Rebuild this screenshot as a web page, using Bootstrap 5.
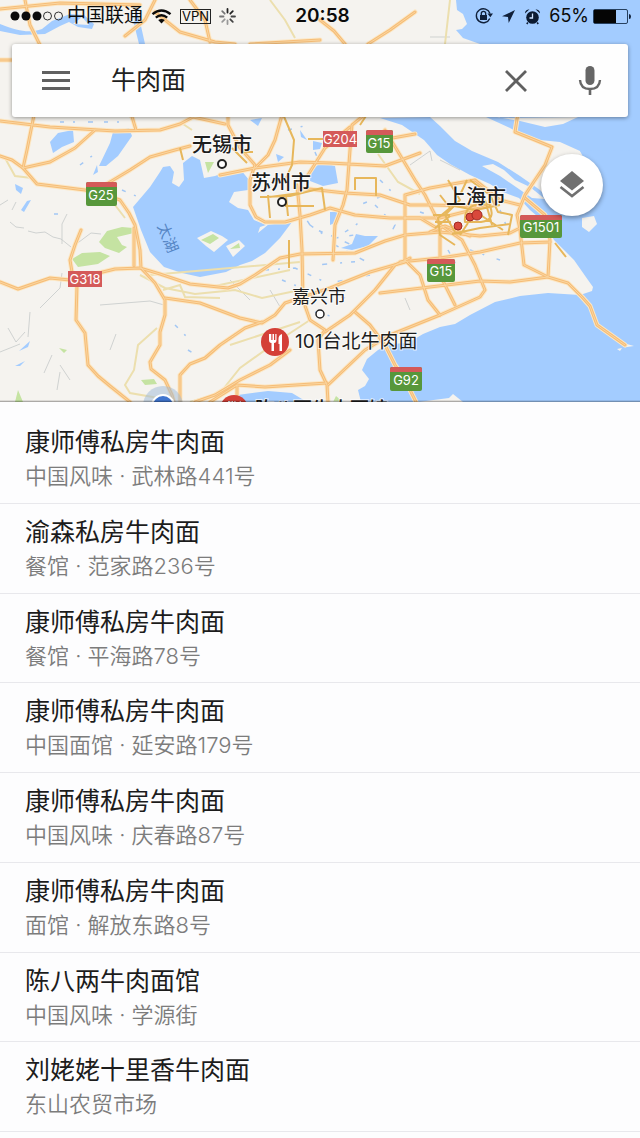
<!DOCTYPE html>
<html lang="zh-CN">
<head>
<meta charset="utf-8">
<meta name="viewport" content="width=device-width, initial-scale=1">
<title>牛肉面</title>
<link href="https://cdn.jsdelivr.net/npm/bootstrap@5.3.0/dist/css/bootstrap.min.css" rel="stylesheet">
<style>
body { font-family: Inter, "Noto Sans CJK SC", sans-serif; background: #fdfdfe; color: #212121; }
.map-pane { height: 402px; background: #f5f3ef; }
.map-canvas { position: absolute; inset: 0; width: 100%; height: 100%; }
.map-pane::after { content: ""; position: absolute; inset: auto 0 0 0; height: 2px; background: linear-gradient(transparent, rgba(0,0,0,.4)); }
.status { height: 32px; padding: 0 9px 0 10px; color: #0b0b0b; font-size: 19px; line-height: 32px; }
.status > div { flex: 1 1 0; }
.status .clock { flex: 0 0 auto; margin-left: 4px; font-weight: 600; }
.status-text { font-size: 18px; }
.carrier { margin-left: 3px; }
.vpn { font-size: 13px; line-height: 13px; border: 1px solid #222; padding: 0 1px; }
.search { height: 73px; margin: 12px 12px 0; border-radius: 3px; background: #fefefe; box-shadow: 0 1px 4px rgba(0,0,0,.4); padding: 0 18px 0 24px; }
.search input { font-size: 25px; color: #212121; padding: 0; margin-left: 35px; min-width: 0; }
.search input:focus { box-shadow: none; background: transparent; }
.icon-btn { width: 40px; height: 40px; padding: 0; border: 0; display: flex; align-items: center; justify-content: center; }
.voice { margin-left: 34px; }
.layers { position: absolute; right: 37px; top: 154px; width: 62px; height: 62px; border-radius: 50%; background: #fff; box-shadow: 0 2px 5px rgba(0,0,0,.4); }
.results { padding: 12px 0 6px; }
.results .result.list-group-item { border-width: 0 0 1px; border-color: #e8e8ec; background: transparent; padding: 10px 25px 8px; border-radius: 0; }
.results .result.list-group-item:last-child { border-bottom-width: 1px; }
.result h2 { font-size: 25px; line-height: 36px; font-weight: 400; color: #1c1c1c; margin: 0; }
.result p { font-size: 22px; line-height: 32px; font-weight: 350; color: #7c7c7c; margin: 0; }
.city { font-size: 20px; fill: #1d1d1d; stroke: #fff; stroke-opacity: .7; stroke-width: 2; paint-order: stroke; font-weight: 500; }
.place { font-weight: 400; font-size: 19px; }
.shield { font-size: 13px; fill: #fff; font-weight: 400; text-anchor: middle; }
</style>
</head>
<body class="min-vh-100 d-flex flex-column">
<header class="map-pane position-relative overflow-hidden flex-shrink-0">
<svg class="map-canvas" viewBox="0 0 640 402" preserveAspectRatio="xMidYMid slice" role="img" aria-label="地图">
  <defs>
    <g id="roads" fill="none" stroke-linejoin="round" stroke-linecap="round">
      <path d="M0 121L50 127 115 131 160 130 180 124 193 117M35 110L27 150 23 168M95 130L75 148 50 162 23 168M130 110L136 130"/>
      <path d="M0 156L12 160 23 168 37 184 85 190 105 195 120 200 129 213 135 225 140 250 141 268 155 283 165 300 165 315 160 332 160 345 150 362 151 369 165 380 172 395 174 402"/>
      <path d="M105 185L130 170 150 157 175 150 190 146M193 117L225 124"/>
      <path d="M0 282L18 289 50 278 70 280 115 269 140 268 160 274 190 284 228 288 240 284 255 275 280 258 300 254 355 253 385 241 405 235 440 232 480 236 510 233 520 228"/>
      <path d="M77 285L76 320 85 333 88 365 98 376 110 386 130 402M72 272L70 260 75 245 81 230"/>
      <path d="M165 298L200 303 240 318 262 323 275 315 285 303 330 288 370 272 405 262M134 228L134 266"/>
      <path d="M180 402L180 375 190 364 205 358 220 345 245 328 262 322M195 402L215 395 240 380 270 365 290 350M210 402L237 385 265 387 327 383M237 385V395"/>
      <path d="M297 185L300 215 302 250 303 300 310 320 325 330 318 340 320 370 327 385 328 402M325 332L350 315 375 290 395 265 410 258"/>
      <path d="M228 100L228 125 240 148 255 165 250 180 250 205 256 217 265 222 285 222 310 215 330 208 355 215 390 218 420 218 440 230M282 115L275 140 268 155 255 168 220 175"/>
      <path d="M255 168L300 162 330 163 385 166 420 153M368 112L352 125 350 150 347 190 343 205 335 225 333 260M350 127L325 148 308 175"/>
      <path d="M385 130L403 160 415 180 425 195 440 225 462 240 475 265 485 290 480 297 440 315 390 335 365 350 328 385"/>
      <path d="M300 188L345 193 380 195 410 205 430 205 475 206M405 195L430 188 475 180 500 200 520 205M405 195L405 260 420 275 428 300 440 315"/>
      <path d="M520 100L515 132 530 138 552 147 545 165 535 180 525 195 517 215 520 230 524 265 548 277 568 283 582 297 590 306 597 325 625 345M525 198L545 215 550 240 548 277M387 139L415 134"/>
      <path d="M548 277L510 282 480 281 430 287 380 293M440 228L440 275 455 305M400 262L440 258 480 252 520 243 550 242M355 312L370 325 385 345 395 365 405 380 416 402"/>
      <path d="M25 0L30 25 40 45M0 9L60 3 140 5M155 0L145 20 125 36M155 12L180 32 215 42 235 44M190 0L205 20 210 42M320 20L334 31 345 44M368 44L390 30 415 12M0 60H12M430 232L445 226 470 236M405 218L440 218 480 208 490 205M250 44L320 40"/>
    </g>
  </defs>
  <rect width="640" height="402" fill="#f5f3ef"/>
  <g fill="#a3ccff">
    <path d="M456 0L457 10 463 14 467 24 462 29 456 30 463 38 480 44 500 118 578 117 563 124 545 127 520 121 497 117 486 117 510 128 530 139 560 142 580 151 598 168 640 160V0Z"/>
    <path d="M380 118L402 125 424 140 437 155 450 164 470 175 490 184 503 192 519 198 530 210 544 222 554 240 574 260 588 280 593 287 592 291 580 295 548 293 520 296 495 302 470 315 455 324 440 327 423 334 408 343 390 344 378 350 367 359 362 370 369 379 365 386 358 390 361 402H640V150L580 151 598 185 560 210 540 190 520 176 498 162 472 151 455 141 440 126 430 117Z"/>
    <path d="M133 207L150 187 160 172 163 167 170 166 174 172 172 183 179 187 184 180 183 163 192 156 200 160 204 178 215 176 228 171 241 170 249 180 248 190 234 192 229 202 238 208 248 210 254 220 266 225 292 222 280 238 265 253 252 261 240 265 226 272 200 277 182 273 164 267 150 252 141 230Z"/>
    <path d="M50 142L58 133 73 130 74 142 62 147 53 153ZM113 132L129 128 132 136 118 156 106 166 99 166 110 143ZM311 170L322 162 335 166 338 183 323 186 310 181ZM341 248L352 244 356 234 365 236 378 236 368 246 352 250ZM330 212H338L337 222 330 225ZM15 184L23 188 21 194 16 190ZM31 200L24 212 21 210 27 201ZM230 396L268 391 292 393 307 402H234ZM300 130L307 140 301 137ZM313 141L322 143 320 149 313 150ZM97 165L93 175 98 172ZM276 154L284 157 278 162ZM250 120L262 118 258 126ZM19 351L30 341 28 347ZM15 366L25 361 20 366Z"/>
    <path d="M0 24C20 32 30 33 42 29L52 21 70 14 84 15 94 24 92 29 78 27 69 22 60 26 45 34 20 35 0 31ZM136 8L141 26 145 44H139L134 24Z"/>
  </g>
  <g fill="#f5f3ef">
    <path d="M482 166L493 164 504 170 515 180 530 187 545 199 532 198 516 187 500 176ZM582 218L594 216 597 224 589 232 582 227ZM197 238L211 231 222 236 228 240 214 252 206 246ZM226 246L239 240 245 246 233 257ZM260 227L269 224 258 233ZM418 402L449 398 453 394 463 402ZM73 24L82 17 89 25ZM623 343L634 346 627 347ZM617 349L622 348 620 351Z"/>
  </g>
  <g fill="#c5e3a2">
    <path d="M99 242L107 231 122 227 133 228 134 233 117 237 122 245 127 247 119 253 105 248ZM72 259L82 253 100 252 110 256 98 264 78 267ZM201 240L213 234 219 238 210 244ZM141 380L154 379 157 384 145 385ZM59 348L67 350 64 353ZM15 402L18 390 23 402ZM205 162L214 162 208 173ZM230 249L239 243 240 248ZM336 396L343 402H333Z"/>
  </g>
  <g fill="none" stroke="#c5c9c9" stroke-width="1" opacity=".8">
    <path d="M0 205l8-5m8 2l-4 8m-2 12l6 5 8 1m4 3l8 2 9-1 8 5 8 2 10 8m4-2l16-12 10 1M67 214l-5 10 0 20M30 312l-2 25M8 328l8 14 9-10M40 308l20-20 2-15M52 355l-8 18M60 372l-3 18M70 380l-10-15M410 165l20-14 2 10M405 298l5 12M100 305l50-4 14 4M0 352l20-8M440 160l20 10M230 280l20 20M270 290l12 20M110 350l6-16M430 37h20"/>
  </g>
  <g fill="none" stroke="#8dbcf5" stroke-width="1.5" stroke-dasharray="4 9 2 13 5 11" opacity=".8">
    <path d="M60 122h60M80 165l16-12M122 190l14 6M286 205l14 5 12 18 20 8 22 10M310 225l20 14 30-5M335 245l30 16-50 4M265 270l30-2 30 14M282 280l25 10-20 14M375 205l20 20-10 20M420 212l30 10M470 250l30 10M380 180l12 12-30 12M345 232l18-12M175 325l12 12M188 350l10 6M54 214h6M288 130l24-6M315 152l5 12M500 210l8 20M448 250l12 22M370 275l-40 8M345 298l-22-6M315 312l30 8"/>
  </g>
  <g fill="none" stroke="#ecdfae" stroke-width="2">
    <path d="M5 158L15 176 32 178M140 275L165 288 195 294 235 290 262 298 300 290M163 290L180 285 185 297 220 298M157 328L138 345 134 370 125 385 130 393 170 400M190 402L220 393 240 368 275 343 310 320M150 275L300 262M270 0L285 20 295 38M115 205L125 218M180 122l12 8M445 44L450 0M128 112l5 10M230 345L300 322M378 154l20 28 22 12M215 286L290 270"/>
  </g>
  <use href="#roads" stroke="#fce8c6" stroke-width="5"/>
  <use href="#roads" stroke="#f6bd78" stroke-width="3"/>
  <use href="#roads" stroke="#fad6a0" stroke-width="1"/>
  <g fill="none" stroke="#e7b75b" stroke-width="2" stroke-linejoin="round">
    <path d="M282 112L294 140 292 165 286 178M232 148L247 163M180 148L183 160M355 190V178H376V196M260 197L290 196 322 188 325 210M268 195L270 218M286 196L288 216M285 206H314M270 197l30-4M308 139h22M289 240v28M370 110l-10 15M253 152h-10"/>
    <path d="M440 195L450 208 438 218 440 235 455 245M448 180L460 200 445 215 455 232M433 215H450M435 222h16M470 180L490 195 498 212 512 215 508 235M485 200L492 225M450 205L475 210 500 205M452 234L480 228 510 224M467 180L460 195M435 228L450 216M555 243L566 257M465 222q-2-20 24-18 8 16-8 18zM473 210l30 20M460 235l8-12"/>
  </g>
  <g fill="#d9483b" stroke="#9f2921" stroke-width="1"><circle cx="458" cy="226" r="4"/><circle cx="470" cy="217" r="4"/><circle cx="477" cy="215" r="5"/></g>
  <g fill="#fff" stroke="#222" stroke-width="2"><circle cx="222" cy="164" r="4"/><circle cx="282" cy="202" r="4"/><circle cx="320" cy="314" r="4" stroke-width="1.5"/></g>
  <circle cx="163" cy="406" r="20" fill="#9db9d8" opacity=".5"/><circle cx="163" cy="406" r="11" fill="#3f75cf" stroke="#fff" stroke-width="2"/>
  <text transform="translate(160 238) rotate(68)" font-size="15" fill="#5585c4" y="-2" x="-12">太湖</text>
  <g class="city"><text x="192" y="152">无锡市</text><text x="251" y="190">苏州市</text><text x="446" y="204">上海市</text></g>
  <g class="city place"><text x="292" y="303" font-size="18">嘉兴市</text><text x="295" y="348">101台北牛肉面</text><text x="255" y="416" font-weight="500">陈八两牛肉面馆</text></g>
  <g id="pin"><circle cx="275" cy="342" r="14" fill="#d43f37"/><path d="M269 334v6q0 3 2.500 3v8h2.500v-8q2.500 0 2.500-3v-6h-1.200v6h-1.300v-6h-1.500v6h-1.200v-6zM282 351h-2.500v-7h-1v-5q0-4 3.500-5z" fill="#fff"/></g>
  <use href="#pin" x="-41" y="67"/>
  <g>
    <g fill="#57973b"><rect x="86" y="182" width="31" height="24" rx="2"/><rect x="366" y="130" width="27" height="23" rx="2"/><rect x="520" y="215" width="42" height="23" rx="2"/><rect x="427" y="259" width="28" height="23" rx="2"/><rect x="390" y="367" width="32" height="24" rx="2"/></g>
    <g fill="#d45a59"><path d="M86 187v-3q0-2 2-2h27q2 0 2 2v3zM366 135v-3q0-2 2-2h23q2 0 2 2v3zM520 220v-3q0-2 2-2h38q2 0 2 2v3zM427 264v-3q0-2 2-2h24q2 0 2 2v3zM390 372v-3q0-2 2-2h28q2 0 2 2v3z"/><rect x="323" y="131" width="34" height="16"/><rect x="68" y="271" width="34" height="16"/></g>
  </g>
  <g class="shield"><text x="101" y="200">G25</text><text x="379" y="148">G15</text><text x="541" y="232">G1501</text><text x="441" y="276">G15</text><text x="406" y="385">G92</text><text x="340" y="144">G204</text><text x="85" y="284">G318</text></g>
</svg>

<div class="status position-relative d-flex align-items-center">
  <div class="d-flex align-items-center">
    <svg width="54" height="12" viewBox="0 0 54 12" aria-label="信号"><g fill="#0b0b0b"><circle cx="5" cy="6" r="4.500"/><circle cx="16" cy="6" r="4.500"/><circle cx="27" cy="6" r="4.500"/></g><g fill="none" stroke="#333"><circle cx="37.500" cy="6" r="4"/><circle cx="48.500" cy="6" r="4"/></g></svg>
    <span class="carrier text-nowrap">中国联通</span>
    <svg class="ms-2 flex-shrink-0" width="21" height="15" viewBox="0 0 21 15" fill="none" stroke="#0b0b0b" stroke-width="2.400"><path d="M1.500 5.200q9-7.500 18 0M4.800 8.600q5.700-4.500 11.400 0"/><path d="M10.500 14.500l-3.300-3.400q3.300-2.400 6.600 0z" fill="#0b0b0b" stroke="none"/></svg>
    <span class="vpn ms-2">VPN</span>
    <svg class="ms-2 flex-shrink-0" width="17" height="17" viewBox="-8.500 -8.500 17 17" stroke-width="1.800" stroke-linecap="round"><path d="M0-4V-7.500M2.800-2.800L5.300-5.300" stroke="#222"/><path d="M4 0H7.500M2.800 2.800L5.300 5.300" stroke="#444"/><path d="M0 4V7.500M-2.800 2.800L-5.300 5.300" stroke="#999"/><path d="M-4 0H-7.500M-2.800-2.800L-5.300-5.300" stroke="#777"/></svg>
  </div>
  <div class="clock">20:58</div>
  <div class="d-flex align-items-center justify-content-end">
    <svg width="18" height="18" viewBox="0 0 18 18"><path d="M14.800 11.500a7 7 0 1 1 .2-5" fill="none" stroke="#10203a" stroke-width="1.400"/><path d="M12.500 6.500h5.500l-2.700 3.800z" fill="#10203a"/><rect x="5" y="8" width="7" height="5" fill="#10203a"/><path d="M6.300 8V6.500a2.200 2.200 0 0 1 4.400 0V8" fill="none" stroke="#10203a" stroke-width="1.300"/></svg>
    <svg class="ms-2" width="15" height="15" viewBox="0 0 15 15"><path d="M14 1L1 7.300l6 .7.700 6z" fill="#10203a"/></svg>
    <svg class="ms-2" width="17" height="17" viewBox="0 0 17 17"><circle cx="8.500" cy="9.500" r="6.300" fill="#0c1a30"/><path d="M1 5.500Q1 1.500 5.500 1.200ZM16 5.500Q16 1.500 11.500 1.200Z" fill="#0c1a30"/><path d="M3.800 14.500L2.800 16M13.200 14.500l1 1.500" stroke="#0c1a30" stroke-width="1.500"/><path d="M8.500 5.500V10H5.500" fill="none" stroke="#cfe3ff" stroke-width="1.300"/></svg>
    <span class="status-text ms-2">65%</span>
    <svg class="ms-1" width="38" height="15" viewBox="0 0 38 15"><rect x=".5" y=".5" width="34" height="14" rx="1.500" fill="none" stroke="#26405f"/><rect x="1" y="1" width="22" height="13" fill="#050505"/><path d="M36 5q2 0 2 2.500t-2 2.500z" fill="#10203a"/></svg>
  </div>
</div>

<form class="search position-relative d-flex align-items-center" role="search">
  <button type="button" class="btn icon-btn flex-shrink-0" aria-label="菜单"><svg width="28" height="20" viewBox="0 0 28 20" fill="#606060"><path d="M0 0h28v3H0zM0 8h28v3H0zM0 16h28v3H0z"/></svg></button>
  <input type="text" class="form-control border-0 bg-transparent" value="牛肉面" aria-label="搜索">
  <button type="button" class="btn icon-btn flex-shrink-0" aria-label="清除"><svg width="22" height="22" viewBox="0 0 22 22" stroke="#606060" stroke-width="2.800"><path d="M1 1L21 21M21 1L1 21"/></svg></button>
  <button type="button" class="btn icon-btn voice flex-shrink-0" aria-label="语音搜索"><svg width="24" height="32" viewBox="0 0 24 32"><rect x="7.500" y="1" width="9" height="19" rx="4.500" fill="#666"/><path d="M2 15q.5 9 10 9t10-9" fill="none" stroke="#666" stroke-width="2.400"/><path d="M12 24v6" stroke="#666" stroke-width="2.600"/></svg></button>
</form>
<button type="button" class="btn icon-btn layers" aria-label="图层"><svg width="26" height="28" viewBox="0 0 26 28"><path d="M13 0L25 10 13 19.500 1 10z" fill="#707070"/><path d="M1.500 16L13 25 24.500 16" fill="none" stroke="#707070" stroke-width="2.600"/></svg></button>
</header>

<main class="results list-group list-group-flush flex-grow-1">
  <a href="#" class="result list-group-item list-group-item-action flex-fill"><h2>康师傅私房牛肉面</h2><p>中国风味 · 武林路441号</p></a>
  <a href="#" class="result list-group-item list-group-item-action flex-fill"><h2>渝森私房牛肉面</h2><p>餐馆 · 范家路236号</p></a>
  <a href="#" class="result list-group-item list-group-item-action flex-fill"><h2>康师傅私房牛肉面</h2><p>餐馆 · 平海路78号</p></a>
  <a href="#" class="result list-group-item list-group-item-action flex-fill"><h2>康师傅私房牛肉面</h2><p>中国面馆 · 延安路179号</p></a>
  <a href="#" class="result list-group-item list-group-item-action flex-fill"><h2>康师傅私房牛肉面</h2><p>中国风味 · 庆春路87号</p></a>
  <a href="#" class="result list-group-item list-group-item-action flex-fill"><h2>康师傅私房牛肉面</h2><p>面馆 · 解放东路8号</p></a>
  <a href="#" class="result list-group-item list-group-item-action flex-fill"><h2>陈八两牛肉面馆</h2><p>中国风味 · 学源街</p></a>
  <a href="#" class="result list-group-item list-group-item-action flex-fill"><h2>刘姥姥十里香牛肉面</h2><p>东山农贸市场</p></a>
</main>
<script src="https://cdn.jsdelivr.net/npm/bootstrap@5.3.0/dist/js/bootstrap.bundle.min.js"></script>
</body>
</html>
